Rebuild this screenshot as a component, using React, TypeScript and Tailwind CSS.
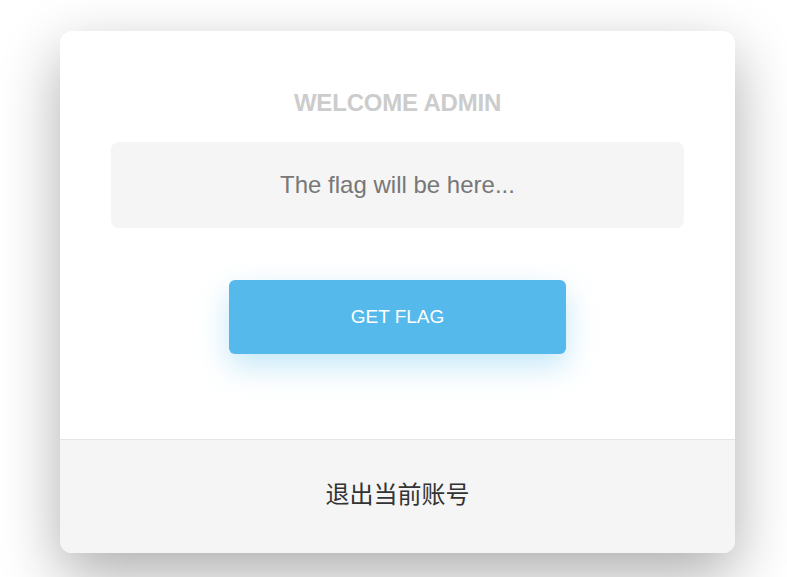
import React from 'react';

const App: React.FC = () => {
  return (
    <div
      className="w-[787px] h-[577px] bg-white overflow-hidden pt-[31px] pl-[60px]"
      style={{ fontFamily: '"Liberation Sans", "Noto Sans CJK SC", Arial, sans-serif' }}
    >
      <div className="w-[675px] h-[522px] bg-white rounded-[12px] overflow-hidden flex flex-col shadow-[0_22px_60px_rgba(0,0,0,0.32)]">
        <div className="h-[408px] flex flex-col items-center">
          <h1 className="mt-[58px] text-[24px] leading-[28px] font-bold text-[#cccccc] tracking-[-0.2px]">WELCOME ADMIN</h1>
          <div className="mt-[25px] w-[573px] h-[86px] bg-[#f5f5f5] rounded-[8px] flex items-center justify-center text-[24px] text-[#777777]">
            The flag will be here...
          </div>
          <button className="mt-[52px] w-[337px] h-[74px] bg-[#56b9ec] rounded-[6px] text-white text-[19px] shadow-[0_12px_30px_rgba(86,185,236,0.35)]">
            GET FLAG
          </button>
        </div>
        <div className="flex-1 border-t border-[#e2e6ea] bg-[#f5f5f5] flex items-center justify-center">
          <span className="text-[24px] text-[#333333] -mt-[4px]">退出当前账号</span>
        </div>
      </div>
    </div>
  );
};

export default App;
